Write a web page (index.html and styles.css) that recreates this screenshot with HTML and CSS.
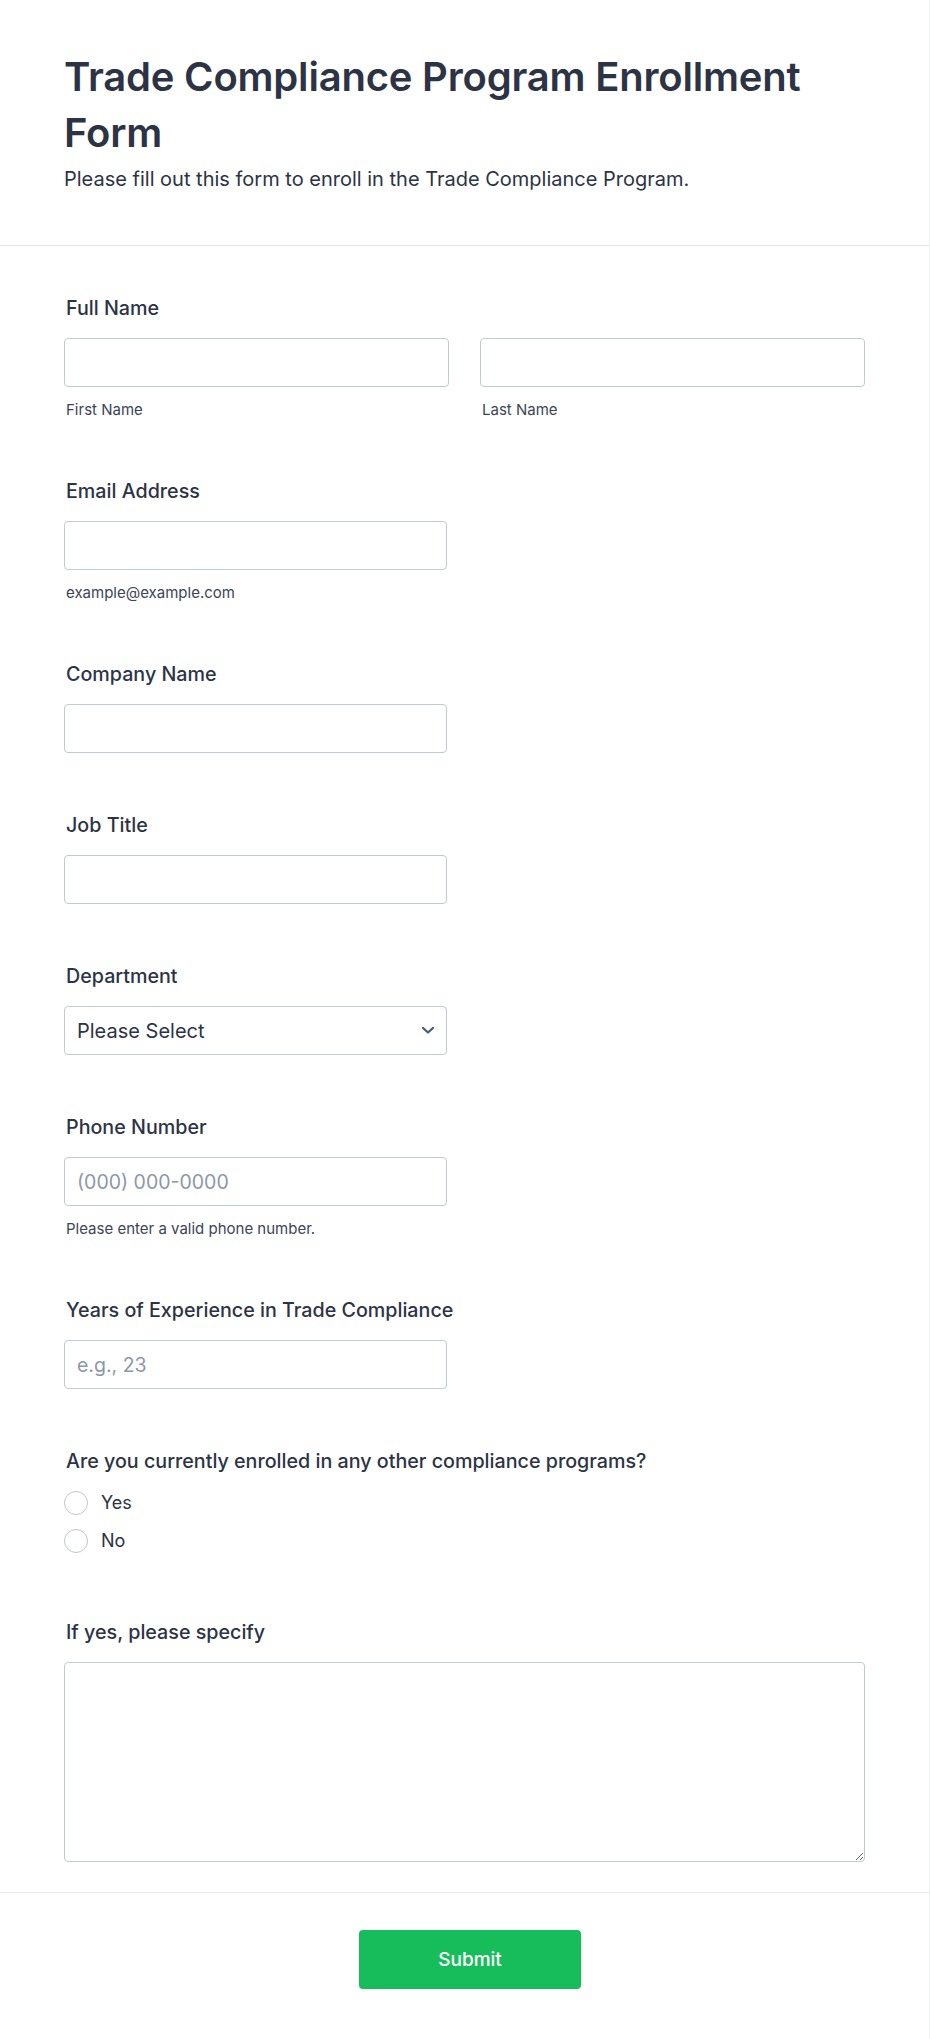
FILE: index.html
```html
<!DOCTYPE html>
<html lang="en">
<head>
<meta charset="utf-8">
<title>Trade Compliance Program Enrollment Form</title>
<link rel="stylesheet" href="styles.css">
</head>
<body>
<div class="page">
  <header class="form-header">
    <h1 class="form-title">Trade Compliance Program Enrollment Form</h1>
    <p class="form-subtitle">Please fill out this form to enroll in the Trade Compliance Program.</p>
  </header>

  <form class="form-body">
    <div class="field">
      <label class="field-label">Full Name</label>
      <div class="name-grid">
        <div class="name-col">
          <input class="text-input" type="text">
          <span class="sublabel">First Name</span>
        </div>
        <div class="name-col">
          <input class="text-input" type="text">
          <span class="sublabel">Last Name</span>
        </div>
      </div>
    </div>

    <div class="field">
      <label class="field-label">Email Address</label>
      <input class="text-input narrow" type="email">
      <span class="sublabel">example@example.com</span>
    </div>

    <div class="field">
      <label class="field-label">Company Name</label>
      <input class="text-input narrow" type="text">
    </div>

    <div class="field">
      <label class="field-label">Job Title</label>
      <input class="text-input narrow" type="text">
    </div>

    <div class="field">
      <label class="field-label">Department</label>
      <div class="select-wrap narrow">
        <select class="select-input">
          <option>Please Select</option>
        </select>
        <svg class="select-chevron" width="12" height="7" viewBox="0 0 12 7" aria-hidden="true">
          <path d="M1 1l5 4.5L11 1" fill="none" stroke="#4b5873" stroke-width="2.2" stroke-linecap="round" stroke-linejoin="round"/>
        </svg>
      </div>
    </div>

    <div class="field">
      <label class="field-label">Phone Number</label>
      <input class="text-input narrow" type="tel" placeholder="(000) 000-0000">
      <span class="sublabel">Please enter a valid phone number.</span>
    </div>

    <div class="field">
      <label class="field-label">Years of Experience in Trade Compliance</label>
      <input class="text-input narrow" type="text" placeholder="e.g., 23">
    </div>

    <div class="field">
      <label class="field-label">Are you currently enrolled in any other compliance programs?</label>
      <div class="radio-group">
        <label class="radio-row"><input class="radio" type="radio" name="enrolled"><span class="radio-text">Yes</span></label>
        <label class="radio-row"><input class="radio" type="radio" name="enrolled"><span class="radio-text">No</span></label>
      </div>
    </div>

    <div class="field">
      <label class="field-label">If yes, please specify</label>
      <textarea class="textarea-input"></textarea>
    </div>
  </form>

  <footer class="form-footer">
    <button class="submit-btn" type="button">Submit</button>
  </footer>
</div>
</body>
</html>
```

FILE: styles.css
```css
* {
  box-sizing: border-box;
}

html, body {
  margin: 0;
  padding: 0;
  background: #ffffff;
}

body {
  font-family: Inter, "Noto Sans", "Liberation Sans", sans-serif;
  color: #2c3345;
}

.page {
  width: 930px;
  min-height: 2039px;
  border-right: 1px solid #eef0f5;
  background: #ffffff;
}

.form-header {
  padding: 49px 64px 52px 64px;
  border-bottom: 1px solid #e1e3ea;
}

.form-title {
  margin: 0;
  font-size: 40px;
  line-height: 56px;
  font-weight: 600;
  color: #2c3345;
  letter-spacing: -0.2px;
}

.form-subtitle {
  margin: 5px 0 0 0;
  font-size: 20px;
  line-height: 27px;
  font-weight: 400;
  color: #2c3345;
}

.form-body {
  display: flex;
  flex-direction: column;
  gap: 59px;
  padding: 49px 64px 30px 64px;
}

.field {
  display: flex;
  flex-direction: column;
  align-items: flex-start;
}

.field-label {
  display: block;
  font-size: 19.7px;
  line-height: 27px;
  font-weight: 500;
  color: #2c3345;
  margin: 0 0 16px 2px;
}

.name-grid {
  display: grid;
  grid-template-columns: 385px 385px;
  column-gap: 31px;
  width: 100%;
}

.name-col {
  display: flex;
  flex-direction: column;
}

.text-input,
.select-input,
.textarea-input {
  display: block;
  width: 100%;
  height: 49px;
  margin: 0;
  padding: 0 12px;
  border: 1px solid #c3c8d5;
  border-radius: 4px;
  background: #ffffff;
  font-family: Inter, "Noto Sans", "Liberation Sans", sans-serif;
  font-size: 19.5px;
  color: #2c3345;
  outline: none;
}

.select-input {
  font-size: 20px;
}

.text-input::placeholder {
  color: #8d97aa;
  opacity: 1;
}

.narrow {
  width: 383px;
}

.sublabel {
  display: block;
  margin: 14px 0 0 2px;
  font-size: 15px;
  line-height: 18px;
  color: #3b4457;
}

.select-wrap {
  position: relative;
}

.select-input {
  appearance: none;
  -webkit-appearance: none;
  padding-right: 36px;
  cursor: pointer;
}

.select-chevron {
  position: absolute;
  right: 13px;
  top: 21px;
  pointer-events: none;
}

.radio-group {
  display: flex;
  flex-direction: column;
  gap: 14px;
  padding-bottom: 7px;
}

.radio-row {
  display: flex;
  align-items: center;
  height: 24px;
  cursor: pointer;
}

.radio {
  appearance: none;
  -webkit-appearance: none;
  width: 24px;
  height: 24px;
  margin: 0;
  border: 1.5px solid #bfc5d2;
  border-radius: 50%;
  background: #ffffff;
  flex: none;
}

.radio-text {
  margin-left: 13px;
  font-size: 18px;
  line-height: 24px;
  color: #2c3345;
}

.textarea-input {
  height: 200px;
  padding: 10px 12px;
  resize: both;
}

.form-footer {
  border-top: 1px solid #e6e8ee;
  padding: 37px 0 50px 0;
  display: flex;
  justify-content: center;
}

.submit-btn {
  width: 222px;
  height: 59px;
  margin-left: 11px;
  border: none;
  border-radius: 4px;
  background: #18bd5b;
  color: #ffffff;
  font-family: Inter, "Noto Sans", "Liberation Sans", sans-serif;
  font-size: 19px;
  font-weight: 500;
  cursor: pointer;
}
```
